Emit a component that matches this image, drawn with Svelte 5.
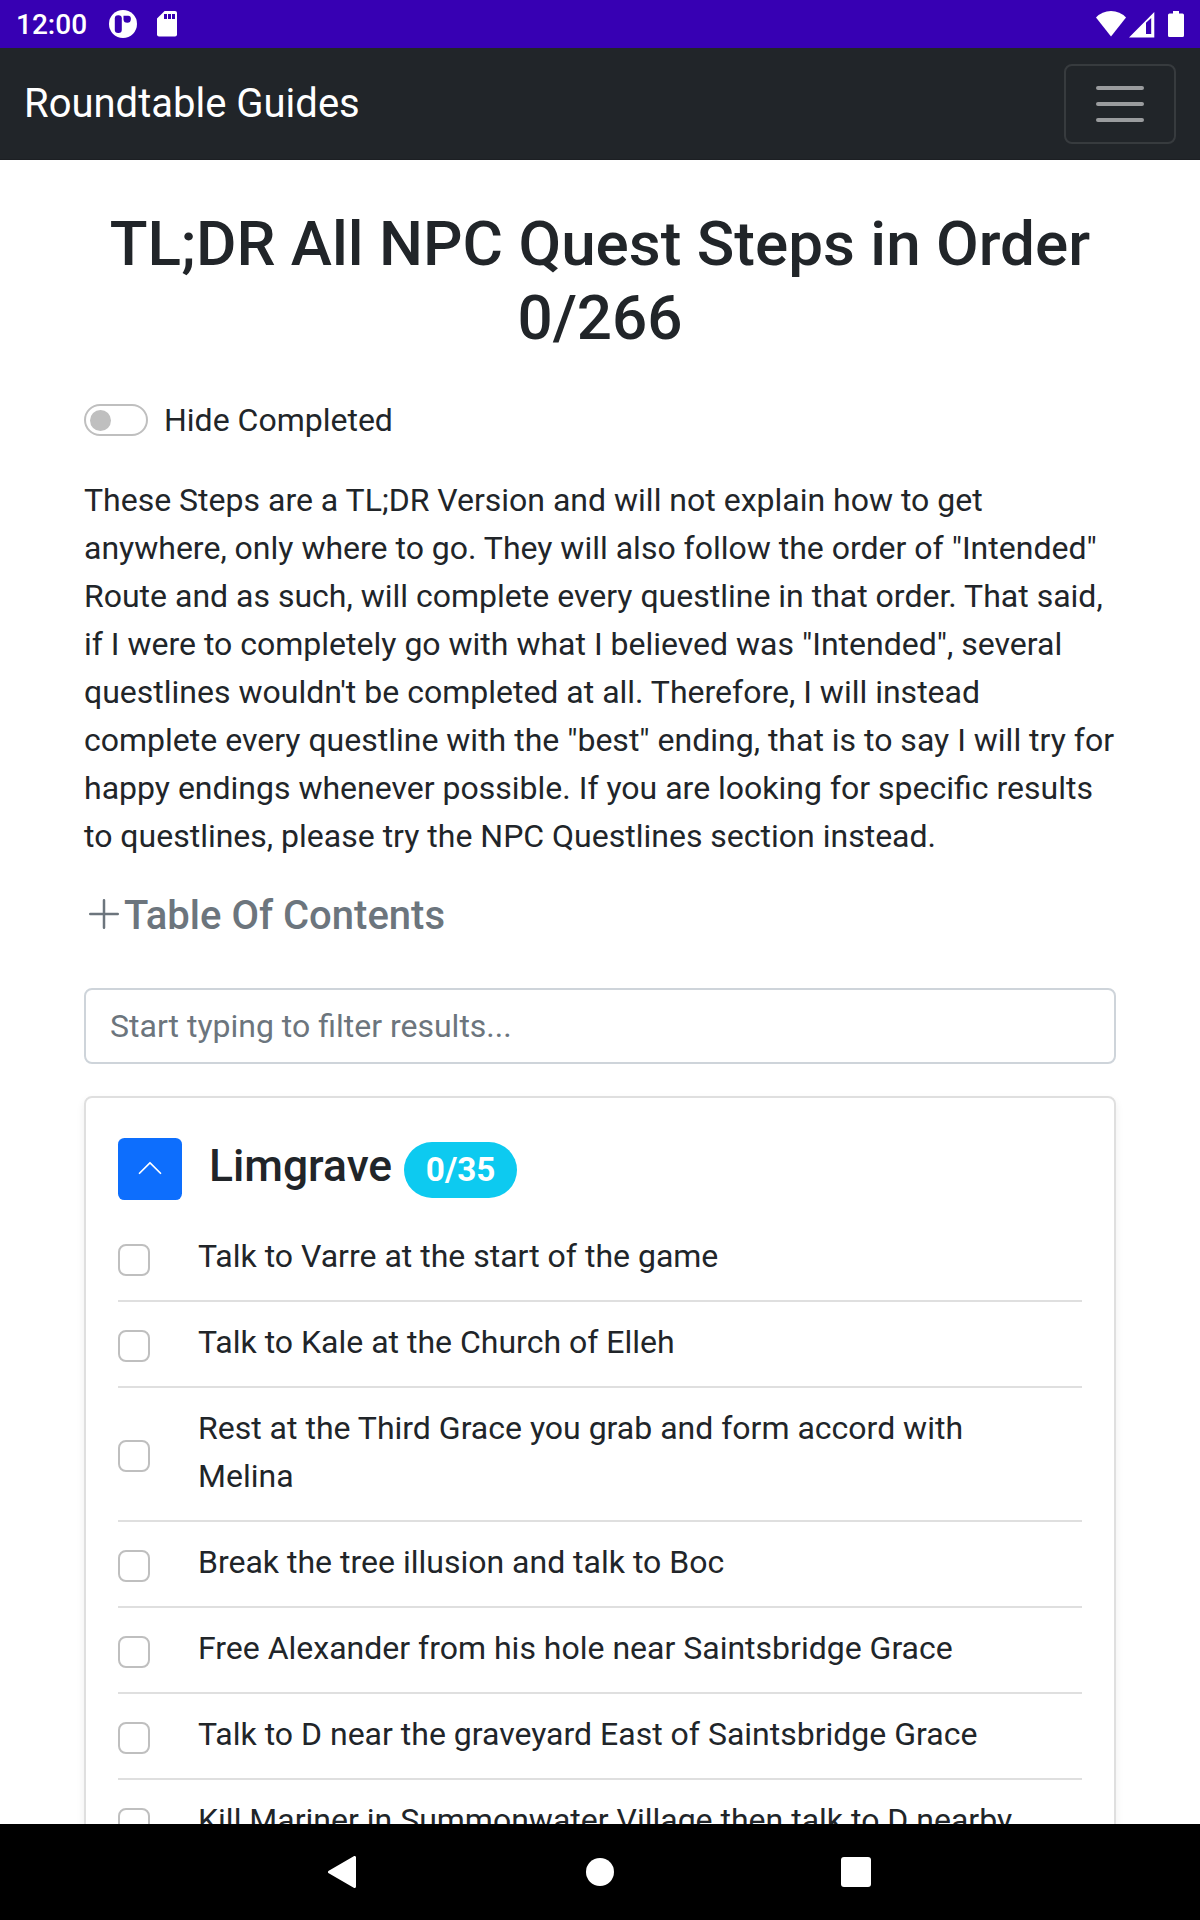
<script>
  let hideCompleted = $state(false);
  let filter = $state('');
  let steps = $state([
    'Talk to Varre at the start of the game',
    'Talk to Kale at the Church of Elleh',
    'Rest at the Third Grace you grab and form accord with Melina',
    'Break the tree illusion and talk to Boc',
    'Free Alexander from his hole near Saintsbridge Grace',
    'Talk to D near the graveyard East of Saintsbridge Grace',
    'Kill Mariner in Summonwater Village then talk to D nearby'
  ].map((text) => ({ text, done: false })));
</script>

<div class="screen">
  <div class="status">
    <span class="clock">12:00</span>
    <svg class="app-icon" width="28" height="28" viewBox="0 0 28 28">
      <circle cx="14" cy="14" r="14" fill="#fff" />
      <rect x="5.8" y="5.2" width="7" height="17.800" rx="3.3" fill="#3700b3" />
      <path d="M14.500 5.800h4.800q2.500 0 2.500 2.500v1q0 3.500-3.500 3.500-3.800 0-3.800-3.500z" fill="#3700b3" />
    </svg>
    <svg class="sd" width="20" height="26" viewBox="0 0 20 26">
      <path d="M7.600 0H18q2 0 2 2v21.500q0 2-2 2H2q-2 0-2-2V7.600z" fill="#fff" />
      <path d="M7 3h3v5H7zM11 3h3v5h-3zM15 3h3v5h-3z" fill="#3700b3" />
    </svg>
    <div class="system">
      <svg width="30" height="26" viewBox="0 0 30 26"><path d="M0 6.500Q6 0 15 0t15 6.500L15 25.500z" fill="#fff" /></svg>
      <svg class="signal" width="26" height="26" viewBox="0 0 26 26"><path fill-rule="evenodd" d="M25.300 0v25.500H0zM17 10.800v11.200h5.200V6z" fill="#fff" /></svg>
      <svg class="battery" width="16" height="26" viewBox="0 0 16 26"><path d="M5 0h6v2.500h3.500q1.500 0 1.500 1.500v20.500q0 1.500-1.500 1.500h-13Q0 26 0 24.500V4q0-1.500 1.500-1.500H5z" fill="#fff" /></svg>
    </div>
  </div>

  <nav class="navbar">
    <span class="brand">Roundtable Guides</span>
    <button class="toggler" aria-label="Toggle navigation">
      <svg width="60" height="60" viewBox="0 0 30 30"><path d="M4 7h22M4 15h22M4 23h22" stroke="rgba(255,255,255,.55)" stroke-linecap="round" stroke-width="2" /></svg>
    </button>
  </nav>

  <main>
    <h1>TL;DR All NPC Quest Steps in Order 0/266</h1>

    <label class="switch">
      <input type="checkbox" bind:checked={hideCompleted} />
      <span class="track"><span class="knob"></span></span>
      Hide Completed
    </label>

    <p>
      These Steps are a TL;DR Version and will not explain how to get anywhere, only where to go. They will
      also follow the order of "Intended" Route and as such, will complete every questline in that order.
      That said, if I were to completely go with what I believed was "Intended", several questlines wouldn't
      be completed at all. Therefore, I will instead complete every questline with the "best" ending, that
      is to say I will try for happy endings whenever possible. If you are looking for specific results to
      questlines, please try the NPC Questlines section instead.
    </p>

    <h2>
      <svg width="40" height="40" viewBox="0 0 16 16" fill="currentColor"><path d="M8 2a.5.5 0 0 1 .5.5v5h5a.5.5 0 0 1 0 1h-5v5a.5.5 0 0 1-1 0v-5h-5a.5.5 0 0 1 0-1h5v-5A.5.5 0 0 1 8 2Z" /></svg>
      <span>Table Of Contents</span>
    </h2>

    <input class="filter" type="search" placeholder="Start typing to filter results..." bind:value={filter} />

    <section class="card">
      <header>
        <button class="collapse" aria-label="Collapse section">
          <svg width="28" height="28" viewBox="0 0 16 16" fill="#fff"><path d="M7.646 4.646a.5.5 0 0 1 .708 0l6 6a.5.5 0 0 1-.708.708L8 5.707l-5.646 5.647a.5.5 0 0 1-.708-.708l6-6z" /></svg>
        </button>
        <h3>Limgrave</h3>
        <span class="badge">0/35</span>
      </header>
      <ul>
        {#each steps as step}
          <li>
            <input type="checkbox" aria-label={step.text} bind:checked={step.done} />
            <span>{step.text}</span>
          </li>
        {/each}
      </ul>
    </section>
  </main>

  <div class="sysnav">
    <svg width="28" height="32" viewBox="0 0 28 32"><path d="M26.500 1.500v29L1.500 16z" fill="#fff" stroke="#fff" stroke-width="3" stroke-linejoin="round" /></svg>
    <svg width="28" height="28" viewBox="0 0 28 28"><circle cx="14" cy="14" r="14" fill="#fff" /></svg>
    <svg width="30" height="30" viewBox="0 0 30 30"><rect width="30" height="30" rx="3" fill="#fff" /></svg>
  </div>
</div>

<style>
  :global(body) { margin: 0; background: #fff; }
  .screen {
    box-sizing: border-box;
    width: 1200px;
    height: 1920px;
    display: flex;
    flex-direction: column;
    overflow: hidden;
    font: 400 32px/48px Roboto, sans-serif;
    color: #212529;
    background: #fff;
  }
  .screen *, .screen *::before { box-sizing: border-box; }
  svg { display: block; flex: none; }

  .status {
    flex: none;
    height: 48px;
    padding: 0 16px;
    display: flex;
    align-items: center;
    background: #3700b3;
    color: #fff;
  }
  .clock { width: 93px; font-size: 28px; font-weight: 500; padding-top: 2px; }
  .sd { margin-left: 20px; }
  .system { margin-left: auto; display: flex; }
  .signal { margin: 1px 0 0 3px; }
  .battery { margin-left: 13px; }

  .navbar {
    flex: none;
    height: 112px;
    padding: 0 24px;
    display: flex;
    align-items: center;
    justify-content: space-between;
    background: #212529;
    box-shadow: inset 0 -1px #1c1f23;
  }
  .brand { font-size: 40px; line-height: 60px; color: #fff; padding-bottom: 1px; }
  .toggler {
    padding: 8px 24px;
    border: 2px solid rgba(255, 255, 255, .1);
    border-radius: 8px;
    background: none;
  }
  .toggler path { fill: none; }

  main { flex: 1; min-height: 0; padding: 47px 84px 0; overflow: hidden; }
  h1 { margin: 0 0 40.200px; font-size: 62px; line-height: 74.400px; font-weight: 500; text-align: center; }

  .switch { display: flex; align-items: center; gap: 16px; }
  .switch input { position: absolute; opacity: 0; width: 0; height: 0; margin: 0; }
  .track {
    width: 64px;
    height: 32px;
    padding: 3.500px;
    display: flex;
    border: 2px solid #bfbfbf;
    border-radius: 32px;
  }
  .knob { width: 21px; height: 21px; border-radius: 50%; background: #bfbfbf; }
  .switch input:checked + .track { justify-content: flex-end; }

  p { margin: 32px 0; }
  h2 {
    margin: 0 0 48px;
    height: 48px;
    display: flex;
    align-items: center;
    font-size: 40px;
    font-weight: 500;
    color: #6c757d;
  }
  h2 svg { margin-bottom: 4px; }
  h2 span { margin-top: -1px; }

  .filter {
    display: block;
    width: 100%;
    height: 76px;
    padding: 12px 24px;
    border: 2px solid #ced4da;
    border-radius: 8px;
    font: inherit;
    appearance: none;
    outline: none;
  }
  .filter::placeholder { color: #6c757d; opacity: 1; }

  .card {
    margin-top: 32px;
    padding: 40px 32px 32px;
    border: 2px solid #dfdfdf;
    border-radius: 8px;
    box-shadow: 0 4px 8px rgba(0, 0, 0, .075);
  }
  header { height: 62px; display: flex; align-items: center; }
  .collapse {
    width: 64px;
    height: 62px;
    display: grid;
    place-items: center;
    padding: 0 0 2px;
    border: 0;
    border-radius: 6.400px;
    background: #0d6efd;
  }
  h3 { margin: 0 12px 7px 27px; font-size: 44.400px; font-weight: 500; }
  .badge {
    margin-top: 2px;
    padding: 11.650px 21.650px;
    border-radius: 50px;
    background: #0dcaf0;
    color: #fff;
    font-size: 33.300px;
    line-height: 33.300px;
    font-weight: 700;
  }

  ul { list-style: none; margin: 16px 0 0; padding: 0; }
  li {
    padding: 16px 60px 20px 0;
    display: flex;
    align-items: center;
    gap: 48px;
    border-bottom: 2px solid #dfdfdf;
  }
  li input {
    flex: none;
    appearance: none;
    width: 32px;
    height: 32px;
    margin: 8px 0 0;
    border: 2px solid #bfbfbf;
    border-radius: 8px;
    background: #fff;
  }
  li input:checked { background: #0d6efd; border-color: #0d6efd; }

  .sysnav {
    flex: none;
    height: 96px;
    padding: 0 329px 0 328px;
    display: grid;
    grid-template-columns: 1fr 28px 1fr;
    align-items: center;
    background: #000;
  }
  .sysnav svg:nth-child(2) { margin-left: 0.500px; }
  .sysnav svg:last-child { justify-self: end; }
</style>
